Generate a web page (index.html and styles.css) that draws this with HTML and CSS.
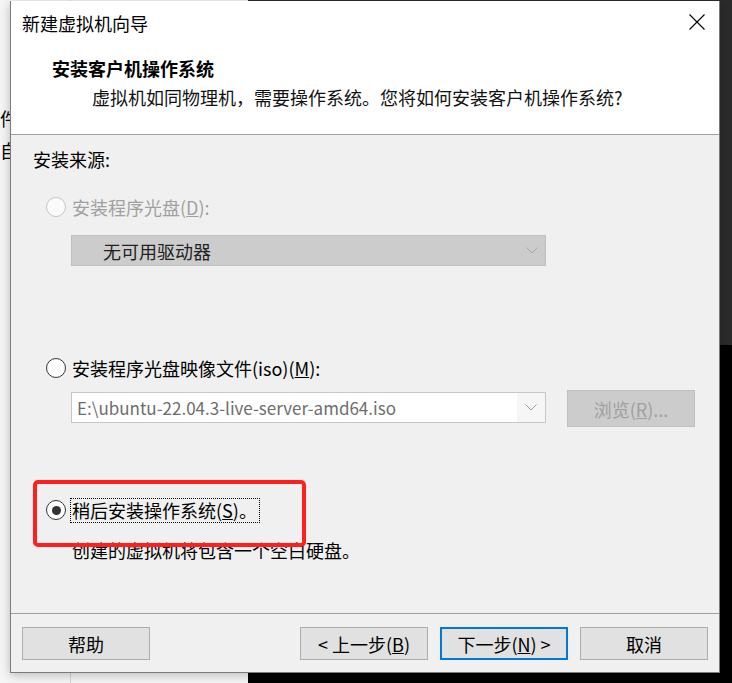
FILE: index.html
```html
<!DOCTYPE html>
<html lang="zh-CN">
<head>
<meta charset="utf-8">
<title>新建虚拟机向导</title>
<link rel="stylesheet" href="styles.css">
</head>
<body>
<div class="desk">
  <div class="behind">件<br>自</div>
  <div class="dialog">
    <div class="header">
      <div class="titlebar">
        <span class="title">新建虚拟机向导</span>
        <svg class="close" width="16" height="16" viewBox="0 0 16 16"><path d="M0.5 0.5 L15.5 15.5 M15.5 0.5 L0.5 15.5" stroke="#000" stroke-width="1.1" fill="none"/></svg>
      </div>
      <div class="heading">安装客户机操作系统</div>
      <div class="subtitle">虚拟机如同物理机，需要操作系统。您将如何安装客户机操作系统?</div>
    </div>
    <div class="body">
      <div class="section-label">安装来源:</div>

      <div class="radio-row row1 disabled">
        <span class="radio"></span>
        <span class="label">安装程序光盘(<u>D</u>):</span>
      </div>
      <div class="select disabled-select">
        <span class="select-text">无可用驱动器</span>
        <svg class="chev" width="12" height="7" viewBox="0 0 12 7"><path d="M0.5 0.5 L6 6 L11.5 0.5" stroke="#a6a6a6" fill="none"/></svg>
      </div>

      <div class="radio-row row2">
        <span class="radio"></span>
        <span class="label">安装程序光盘映像文件(iso)(<u>M</u>):</span>
      </div>
      <div class="combo-row">
        <div class="combo">
          <span class="combo-text">E:\ubuntu-22.04.3-live-server-amd64.iso</span>
          <span class="combo-arrow"><svg width="12" height="7" viewBox="0 0 12 7"><path d="M0.5 0.5 L6 6 L11.5 0.5" stroke="#9a9a9a" fill="none"/></svg></span>
        </div>
        <div class="browse">浏览(<u>R</u>)...</div>
      </div>

      <div class="radio-row row3">
        <span class="radio checked"><span class="dot"></span></span>
        <span class="label focus">稍后安装操作系统(<u>S</u>)。</span>
      </div>
      <div class="desc">创建的虚拟机将包含一个空白硬盘。</div>

      <div class="highlight"></div>
    </div>
    <div class="footer">
      <button class="btn">帮助</button>
      <div class="btn-group">
        <button class="btn">&lt; 上一步(<u>B</u>)</button>
        <button class="btn primary">下一步(<u>N</u>) &gt;</button>
        <button class="btn">取消</button>
      </div>
    </div>
  </div>
</div>
</body>
</html>
```
FILE: styles.css
```css
* { box-sizing: border-box; }
html, body { margin: 0; padding: 0; }
body {
  width: 732px;
  height: 683px;
  overflow: hidden;
  font-family: "Noto Sans CJK SC", "Noto Sans", sans-serif;
  font-size: 18px;
  color: #000;
  background:
    linear-gradient(#000, #000) 248px 345px / 484px 338px no-repeat,
    linear-gradient(#2b2b2b, #2b2b2b) 248px 0 / 484px 345px no-repeat,
    linear-gradient(#d6d6d6, #d6d6d6) 70px 0 / 1px 683px no-repeat,
    #f6f6f6;
}
.desk {
  position: relative;
  width: 732px;
  height: 683px;
  padding: 1px 0 0 10px;
}
.behind {
  position: absolute;
  left: 0;
  top: 102px;
  line-height: 32px;
  font-size: 18px;
  color: #000;
}
.dialog {
  position: relative;
  z-index: 1;
  width: 710px;
  height: 672px;
  border: 1px solid #7a7a7a;
  border-top: none;
  background: #f0f0f0;
  display: flex;
  flex-direction: column;
  box-shadow: 0 2px 10px rgba(0,0,0,0.25);
}
.header {
  height: 134px;
  background: #fff;
  border-bottom: 1px solid #a0a0a0;
  flex: none;
}
.titlebar {
  height: 44px;
  display: flex;
  align-items: center;
  justify-content: space-between;
  padding: 0 14px 0 11px;
}
.title { line-height: 44px; }
.close { display: block; margin-top: -2px; }
.heading {
  margin-top: 11px;
  padding-left: 41px;
  line-height: 24px;
  font-weight: 700;
}
.subtitle {
  margin-top: 5px;
  padding-left: 81px;
  line-height: 24px;
  color: #111;
}
.body {
  position: relative;
  height: 479px;
  flex: none;
  border-bottom: 1px solid #a0a0a0;
  padding: 12px 0 0 22px;
}
.section-label { line-height: 24px; }
.radio-row {
  display: flex;
  align-items: center;
  gap: 6px;
  height: 24px;
  margin-left: 13px;
}
.row1 { margin-top: 24px; }
.row2 { margin-top: 90px; }
.row3 { margin-top: 71px; }
.label { line-height: 24px; white-space: nowrap; }
.disabled .label { color: #a0a0a0; }
.radio {
  width: 20px;
  height: 20px;
  border-radius: 50%;
  border: 1px solid #333;
  background: #fff;
  display: flex;
  align-items: center;
  justify-content: center;
  flex: none;
}
.disabled .radio { border-color: #c4c4c4; background: #fbfbfb; }
.dot {
  width: 9px;
  height: 9px;
  border-radius: 50%;
  background: #333;
}
.focus {
  border: 1px dotted #000;
  line-height: 23px;
  padding: 0 2px 0 1px;
  margin-left: -2px;
}
.select {
  margin: 16px 0 0 38px;
  width: 475px;
  height: 31px;
  display: flex;
  align-items: center;
  justify-content: space-between;
  padding: 0 7px 0 31px;
}
.disabled-select {
  background: #cccccc;
  border: 1px solid #bfbfbf;
  color: #222;
}
.chev { display: block; }
.combo-row {
  margin: 10px 0 0 38px;
  display: flex;
  align-items: flex-start;
  gap: 21px;
}
.combo {
  margin-top: 2px;
  width: 475px;
  height: 31px;
  border: 1px solid #c6c6c6;
  background: #fff;
  display: flex;
}
.combo-text {
  flex: 1;
  padding-left: 5px;
  line-height: 29px;
  font-size: 17px;
  color: #6d6d6d;
  white-space: nowrap;
}
.combo-arrow {
  width: 28px;
  background: #f6f6f6;
  display: flex;
  align-items: center;
  justify-content: center;
}
.browse {
  width: 128px;
  height: 37px;
  background: #cccccc;
  border: 1px solid #bfbfbf;
  color: #a0a0a0;
  display: flex;
  align-items: center;
  justify-content: center;
}
.desc {
  margin: 16px 0 0 39px;
  line-height: 24px;
}
.highlight {
  position: absolute;
  left: 22px;
  top: 345px;
  width: 273px;
  height: 67px;
  border: 4px solid #ff1f1f;
  border-radius: 5px;
}
.footer {
  flex: 1;
  display: flex;
  justify-content: space-between;
  align-items: flex-start;
  padding: 13px 11px 0 11px;
}
.btn-group { display: flex; gap: 12px; }
.btn {
  width: 128px;
  height: 33px;
  background: #e1e1e1;
  border: 1px solid #adadad;
  font-family: inherit;
  font-size: 18px;
  color: #000;
  padding: 0;
  line-height: 30px;
  margin: 0;
}
.btn.primary { border: 2px solid #0078d7; }
```
